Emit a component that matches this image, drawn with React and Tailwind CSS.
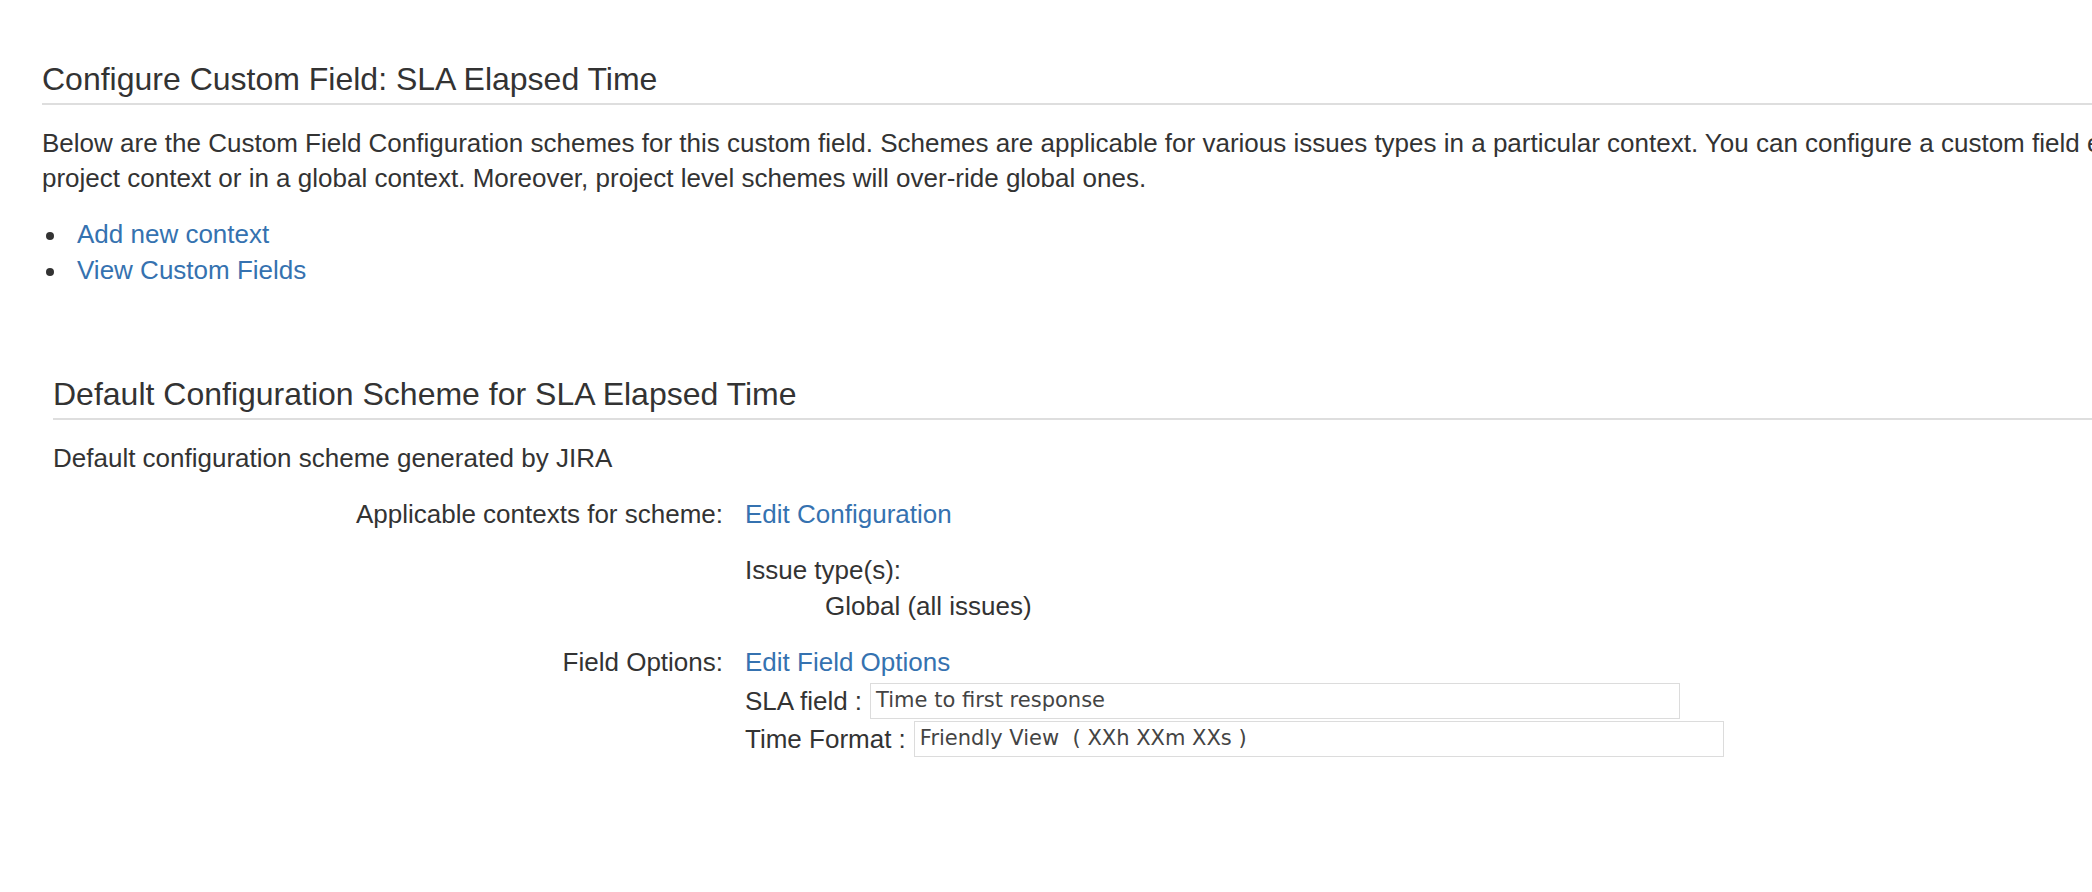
import React from "react"

const font = { fontFamily: '"Liberation Sans", Arial, sans-serif' }

function Bullet({ children }) {
  return (
    <li className="flex items-center h-[36px]">
      <span className="w-[8px] h-[8px] rounded-full bg-[#333] ml-[4px] mr-[23px] mt-[4px] shrink-0" />
      <a className="text-[#3572b0] cursor-pointer">{children}</a>
    </li>
  )
}

function Row({ label, children, className = "" }) {
  return (
    <div className={`flex ${className}`}>
      <div className="w-[692px] shrink-0 text-right pr-[22px] leading-[36px]">{label}</div>
      <div className="flex flex-col">{children}</div>
    </div>
  )
}

function FieldBox({ label, value }) {
  return (
    <div className="flex items-center h-[36px]">
      <span className="leading-[36px] whitespace-pre">{label}</span>
      <div
        className="ml-[8px] w-[810px] h-[36px] border border-[#dcdcdc] px-[5px] flex items-center text-[21px] text-[#444] whitespace-pre"
        style={{ fontFamily: '"DejaVu Sans", Verdana, sans-serif' }}
      >
        {value}
      </div>
    </div>
  )
}

export default function App() {
  return (
    <div className="w-[2092px] h-[892px] overflow-hidden bg-white text-[#333] text-[26px]" style={font}>
      <div className="w-[2600px] pl-[42px] pt-[59px]">
        <h2 className="text-[32px] leading-[40px] font-normal pb-[4px] border-b-2 border-[#dedede]">
          Configure Custom Field: SLA Elapsed Time
        </h2>
        <p className="mt-[21px] leading-[35px]">
          Below are the Custom Field Configuration schemes for this custom field. Schemes are applicable for various issues types in a particular context. You can configure a custom field either in a
          <br />
          project context or in a global context. Moreover, project level schemes will over-ride global ones.
        </p>
        <ul className="mt-[20px]">
          <Bullet>Add new context</Bullet>
          <Bullet>View Custom Fields</Bullet>
        </ul>

        <div className="mt-[86px] pl-[11px]">
          <h2 className="text-[32px] leading-[40px] font-normal pb-[4px] border-b-2 border-[#dedede]">
            Default Configuration Scheme for SLA Elapsed Time
          </h2>
          <p className="mt-[20px] leading-[36px]">Default configuration scheme generated by JIRA</p>

          <div className="mt-[20px]">
            <Row label="Applicable contexts for scheme:">
              <a className="text-[#3572b0] leading-[36px] cursor-pointer">Edit Configuration</a>
              <div className="mt-[20px] leading-[36px]">Issue type(s):</div>
              <div className="pl-[80px] leading-[36px]">Global (all issues)</div>
            </Row>
            <Row label="Field Options:" className="mt-[20px]">
              <a className="text-[#3572b0] leading-[36px] cursor-pointer">Edit Field Options</a>
              <div className="mt-[3px]">
                <FieldBox label="SLA field :" value="Time to first response" />
              </div>
              <div className="mt-[2px]">
                <FieldBox label="Time Format :" value="Friendly View  ( XXh XXm XXs )" />
              </div>
            </Row>
          </div>
        </div>
      </div>
    </div>
  )
}
